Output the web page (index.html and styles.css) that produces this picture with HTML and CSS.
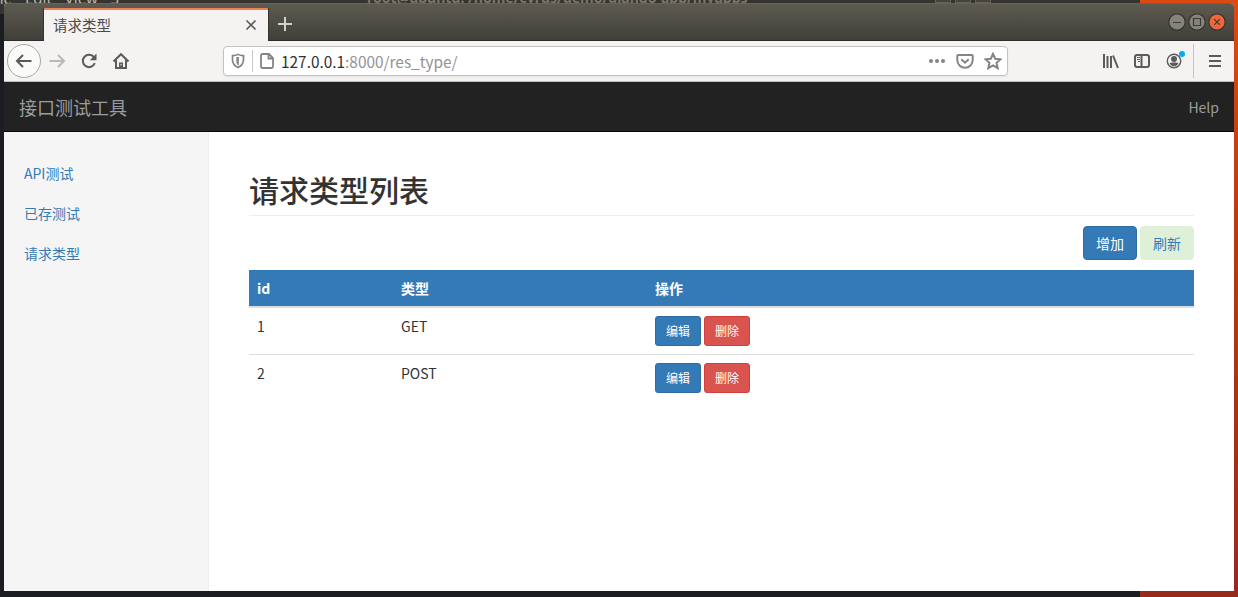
FILE: index.html
```html
<!DOCTYPE html>
<html lang="zh-CN">
<head>
<meta charset="utf-8">
<title>请求类型</title>
<link rel="stylesheet" href="styles.css">
</head>
<body>
<div class="desktop">
  <div class="terminal-strip">
    <span class="terminal-menu"><span>File</span><span>Edit</span><span>View</span><span>S</span></span>
    <span class="terminal-title">root@ubuntu: /home/cyrus/demo/django-app/myapps</span>
    <span class="terminal-controls"><i></i><i></i><i></i></span>
  </div>
  <div class="browser">
    <div class="titlebar">
      <div class="tab">
        <span>请求类型</span>
        <svg class="tab-close" width="12" height="12" viewBox="0 0 12 12"><path d="M1.500 1.500l9 9M10.500 1.500l-9 9"/></svg>
      </div>
      <svg class="new-tab" width="14" height="14" viewBox="0 0 14 14"><path d="M7 0v14M0 7h14"/></svg>
      <div class="window-controls">
        <svg width="18" height="18" viewBox="0 0 18 18"><circle class="ctl" cx="9" cy="9" r="8.200"/><path d="M5 9.500h8"/></svg>
        <svg width="18" height="18" viewBox="0 0 18 18"><circle class="ctl" cx="9" cy="9" r="8.200"/><path d="M5.500 5.500h7v7h-7z"/></svg>
        <svg width="18" height="18" viewBox="0 0 18 18"><circle class="ctl ctl-close" cx="9" cy="9" r="8.200"/><path d="M6.200 6.200l5.600 5.600M11.800 6.200l-5.600 5.600"/></svg>
      </div>
    </div>
    <div class="toolbar">
      <span class="back"><svg width="18" height="18" viewBox="0 0 18 18"><path d="M16.500 9H2M8 3L2 9l6 6"/></svg></span>
      <svg class="forward" width="18" height="18" viewBox="0 0 18 18"><path d="M1.500 9H16M10 3l6 6-6 6"/></svg>
      <svg class="reload" width="18" height="18" viewBox="0 0 18 18"><path d="M14.800 11.200A6.200 6.200 0 1 1 14 5.200"/><path class="solid" d="M16.500 1.500v6.700H9.800z"/></svg>
      <svg class="home" width="18" height="18" viewBox="0 0 18 18"><path d="M1.500 9.500L9 2.200l7.500 7.300M4 8v8h10V8"/><path class="solid" d="M7 16v-5.500h4V16z"/><path class="knob" d="M9 12v1.500"/></svg>
      <div class="urlbar">
        <svg class="shield" width="14" height="16" viewBox="0 0 14 16"><path d="M7 1.400C5.400 2.400 3.300 2.500 1.500 2.700v4c0 3.600 1.900 6 5.500 7.800 3.600-1.800 5.500-4.200 5.500-7.800v-4C10.700 2.500 8.600 2.400 7 1.400z"/><path d="M6.200 4.800v4.200c0 .8.300 1.400.8 1.900V4.800z"/></svg>
        <i class="divider"></i>
        <svg class="page" width="14" height="16" viewBox="0 0 14 16"><path d="M3 1h6l4 4v8.500a1.500 1.500 0 0 1-1.500 1.500h-9A1.500 1.500 0 0 1 1 13.500v-11A1.500 1.500 0 0 1 2.500 1zM8.500 1v4.500H13"/></svg>
        <span class="url"><b>127.0.0.1</b>:8000/res_type/</span>
        <svg class="dots" width="16" height="16" viewBox="0 0 16 16"><circle cx="2" cy="8" r="2"/><circle cx="8" cy="8" r="2"/><circle cx="14" cy="8" r="2"/></svg>
        <svg width="18" height="16" viewBox="0 0 18 16"><path d="M2.200 2h13.600a.9.900 0 0 1 .9.900V7a7.700 7.700 0 0 1-15.400 0V2.900a.9.900 0 0 1 .9-.9zM5.300 6.200L9 9.700l3.700-3.500"/></svg>
        <svg width="18" height="18" viewBox="0 0 18 18"><path d="M9 1.800l2.200 4.900 5.300.6-4 3.500 1.200 5.400L9 13.500l-4.700 2.700 1.200-5.400-4-3.500 5.300-.6z"/></svg>
      </div>
      <svg class="library" width="16" height="16" viewBox="0 0 16 16"><path d="M1 1v14M4.500 3v12M8 3v12M10 2.500L15 15"/></svg>
      <svg class="sidebar-icon" width="16" height="14" viewBox="0 0 16 14"><rect x="1" y="1" width="14" height="12" rx="2"/><path d="M7.500 1v12"/><path class="thin" d="M3 3.500h3M3 5.500h3M4 7.500h2"/></svg>
      <svg class="account" width="20" height="20" viewBox="0 0 20 20"><circle class="ring" cx="8" cy="12" r="6.700"/><circle cx="8" cy="10" r="3"/><path d="M3.500 14c1.500-.8 7.500-.8 9 0-.8 2-2.500 3.300-4.500 3.300S4.300 16 3.500 14z"/><circle class="badge" cx="16" cy="5" r="3"/></svg>
      <i class="menu-divider"></i>
      <svg class="menu" width="12" height="14" viewBox="0 0 12 14"><path d="M0 2h12M0 7h12M0 12h12"/></svg>
    </div>
    <nav class="navbar"><a class="brand">接口测试工具</a><a class="help">Help</a></nav>
    <div class="page-body">
      <aside class="sidebar"><a>API测试</a><a>已存测试</a><a>请求类型</a></aside>
      <main class="main">
        <h2 class="page-header">请求类型列表</h2>
        <div class="actions"><a class="btn btn-primary">增加</a><a class="btn btn-refresh">刷新</a></div>
        <table class="types">
          <thead><tr><th class="col-id">id</th><th class="col-type">类型</th><th>操作</th></tr></thead>
          <tbody>
            <tr><td>1</td><td>GET</td><td><div class="row-actions"><a class="btn btn-sm btn-primary">编辑</a><a class="btn btn-sm btn-danger">删除</a></div></td></tr>
            <tr><td>2</td><td>POST</td><td><div class="row-actions"><a class="btn btn-sm btn-primary">编辑</a><a class="btn btn-sm btn-danger">删除</a></div></td></tr>
          </tbody>
        </table>
      </main>
    </div>
  </div>
</div>
</body>
</html>
```
FILE: styles.css
```css
* { box-sizing: border-box; }
body { margin: 0; font: 14px/20px "Noto Sans CJK SC", sans-serif; color: #333; }
svg { display: block; flex: none; fill: none; stroke: #5c5b59; stroke-width: 2; }

.desktop {
  position: relative;
  display: flex;
  width: 1238px;
  height: 597px;
  padding: 3px 4px 6px;
  overflow: hidden;
  background:
    linear-gradient(90deg, #1b1d22 1140px, transparent 1140px),
    linear-gradient(#dc4a12, #b83a14 40%, #982a1c);
}
.terminal-strip {
  position: absolute;
  top: 0;
  left: 0;
  width: 1140px;
  height: 14px;
  background: #353430;
  color: #7a766a;
  overflow: hidden;
}
.terminal-menu { position: absolute; left: -12px; top: -12px; display: flex; gap: 13px; color: #bdb9ae; font: 15px/20px "Noto Sans", sans-serif; white-space: nowrap; }
.terminal-title { position: absolute; left: 367px; top: -12px; font: bold 14px/20px "Noto Sans", sans-serif; white-space: nowrap; }
.terminal-controls { position: absolute; left: 935px; top: -13px; display: flex; gap: 4px; }
.terminal-controls i { width: 16px; height: 16px; border: 1px solid #65625a; background: #45443f; }

.browser { position: relative; display: flex; flex-direction: column; width: 1230px; height: 588px; border-radius: 4px 4px 0 0; overflow: hidden; background: #fff; }
.titlebar { display: flex; align-items: center; height: 38px; padding-left: 39px; background: linear-gradient(#5d5a50, #403f3a); border-top: 1px solid #65635a; border-bottom: 1px solid #2e2d29; }
.tab { display: flex; align-items: center; justify-content: space-between; align-self: flex-start; width: 226px; height: 37px; margin-top: 4px; padding: 0 11px 4px 9px; border: 1px solid #35342f; border-width: 0 1px; background: #f4f3f2; font-size: 14.500px; color: #4b4a48; box-shadow: inset 0 2px #ee8257; }
.tab-close { stroke: #5c5b59; stroke-width: 1.700; }
.new-tab { margin-left: 9px; margin-top: 4px; stroke: #d4d1c9; }
.window-controls { display: flex; gap: 2px; margin-left: auto; padding-right: 8px; }
.window-controls svg { stroke: #3a3934; stroke-width: 1.200; }
.window-controls .ctl { fill: #85837b; stroke: #35342f; }
.window-controls .ctl-close { fill: #ee673b; }

.toolbar { display: flex; align-items: center; height: 41px; padding: 0 13px 1px 3px; background: #f4f3f2; border-bottom: 1px solid #bfbdbb; }
.back { display: grid; place-items: center; width: 34px; height: 34px; border: 1px solid #a9a7a5; border-radius: 50%; background: #fafaf9; }
.forward { margin-left: 7px; stroke: #b9b8b6; }
.reload, .home { margin-left: 14px; }
.solid { fill: #5c5b59; stroke: none; }
.knob { stroke: #f4f3f2; stroke-width: 1; }
.urlbar { display: flex; align-items: center; width: 785px; height: 30px; margin-left: 93px; padding: 0 5px 0 7px; border: 1px solid #c4c2c0; border-radius: 4px; background: #fff; box-shadow: 0 1px 2px #0001; }
.urlbar svg { stroke: #858483; }
.urlbar svg + svg { margin-left: 10px; }
.urlbar .shield { stroke-width: 1.700; }
.urlbar .divider { width: 1px; height: 22px; margin: 0 7px; background: #c8c8c8; }
.urlbar .page { stroke-width: 1.800; }
.urlbar .dots { fill: #858483; stroke: none; margin-left: auto; margin-right: 1px; }
.url { margin-left: 7px; font-size: 15.400px; color: #949393; }
.url b { font-weight: 400; color: #333; }
.library { margin-left: 95px; }
.sidebar-icon { margin-left: 15px; }
.sidebar-icon .thin { stroke-width: 1; }
.account { margin-left: 16px; margin-bottom: 3px; fill: #5c5b59; stroke: none; }
.account .ring { fill: none; stroke: #5c5b59; stroke-width: 1.400; }
.account .badge { fill: #00adf5; }
.menu-divider { width: 1px; height: 34px; margin: 0 15px 0 7px; background: #c6c4c2; }

.navbar { display: flex; align-items: center; justify-content: space-between; height: 50px; padding: 0 15px; background: #222; border-bottom: 1px solid #080808; color: #9d9d9d; }
.brand { font-size: 18px; }
.page-body { display: flex; flex: 1; }
.sidebar { width: 205px; padding: 21px 0; background: #f5f5f5; border-right: 1px solid #eee; }
.sidebar a { display: block; padding: 10px 20px; color: #337ab7; }
.main { flex: 1; padding: 41px 40px; }
.page-header { margin: 0 0 10px; padding-bottom: 9px; border-bottom: 1px solid #eee; font-size: 30px; line-height: 33px; font-weight: 500; }
.actions { display: flex; justify-content: flex-end; gap: 3px; margin-bottom: 10px; }
.btn { display: inline-block; padding: 6px 12px; border: 1px solid transparent; border-radius: 4px; color: #fff; }
.btn-primary { background: #337ab7; border-color: #2e6da4; }
.btn-refresh { background: #dff0d8; border-color: #dff0d8; color: #337ab7; }
.btn-danger { background: #d9534f; border-color: #d43f3a; }
.btn-sm { padding: 5px 10px; font-size: 12px; line-height: 18px; border-radius: 3px; }
.types { width: 100%; border-collapse: collapse; table-layout: fixed; }
.types th { padding: 8px; background: #337ab7; color: #fff; text-align: left; border-bottom: 2px solid #ddd; }
.types td { padding: 8px; border-top: 1px solid #ddd; vertical-align: top; }
.types .col-id { width: 144px; }
.types .col-type { width: 254px; }
.row-actions { display: flex; gap: 3px; }
```
